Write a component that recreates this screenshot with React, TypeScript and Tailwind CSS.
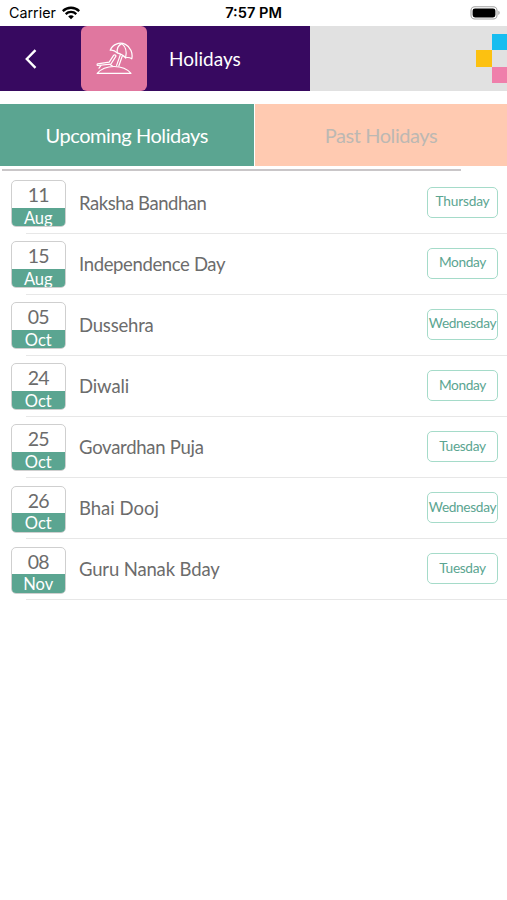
interface Holiday {
  day: string;
  month: string;
  name: string;
  weekday: string;
  tracking: string;
}

const holidays: Holiday[] = [
  { day: "11", month: "Aug", name: "Raksha Bandhan", weekday: "Thursday", tracking: "tracking-[-0.46px]" },
  { day: "15", month: "Aug", name: "Independence Day", weekday: "Monday", tracking: "tracking-[-0.36px]" },
  { day: "05", month: "Oct", name: "Dussehra", weekday: "Wednesday", tracking: "tracking-[-0.2px]" },
  { day: "24", month: "Oct", name: "Diwali", weekday: "Monday", tracking: "tracking-[-0.1px]" },
  { day: "25", month: "Oct", name: "Govardhan Puja", weekday: "Tuesday", tracking: "tracking-[-0.27px]" },
  { day: "26", month: "Oct", name: "Bhai Dooj", weekday: "Wednesday", tracking: "tracking-normal" },
  { day: "08", month: "Nov", name: "Guru Nanak Bday", weekday: "Tuesday", tracking: "tracking-[-0.15px]" },
];

const weekdayTracking: Record<string, string> = {
  Monday: "tracking-[-0.35px]",
  Tuesday: "tracking-[-0.35px]",
  Wednesday: "tracking-[-0.35px]",
  Thursday: "tracking-[-0.2px]",
};

function WifiIcon() {
  return (
    <svg width="18" height="14" viewBox="0 0 18 14" fill="none" stroke="#000" strokeWidth="2.3">
      <path d="M0.8 5.1C5.4 0.6 12.6 0.6 17.2 5.1" />
      <path d="M3.7 8.1C6.7 5.2 11.3 5.2 14.3 8.1" />
      <path d="M6.2 10.4C7.8 8.9 10.2 8.9 11.8 10.4L9 13.2Z" fill="#000" stroke="none" />
    </svg>
  );
}

function BatteryIcon() {
  return (
    <svg width="31" height="14" viewBox="0 0 31 14" fill="none">
      <rect x="1" y="0.8" width="26" height="12.2" rx="3.8" stroke="#a3a3a3" strokeWidth="1.1" />
      <rect x="2.6" y="2.4" width="22.8" height="9" rx="2.4" fill="#000" />
      <path d="M28.3 4.8C30.2 5.5 30.2 8.3 28.3 9Z" fill="#a3a3a3" />
    </svg>
  );
}

function BackIcon() {
  return (
    <svg width="14" height="22" viewBox="0 0 14 22" fill="none" stroke="#fff" strokeWidth="2.4">
      <path d="M11.5 2.2L2.8 11L11.5 19.8" />
    </svg>
  );
}

function BeachIcon() {
  return (
    <svg
      width="38"
      height="34"
      viewBox="0 0 38 34"
      fill="none"
      stroke="#fff"
      strokeWidth="1.2"
      strokeLinecap="round"
      strokeLinejoin="round"
    >
      {/* umbrella */}
      <path d="M15.2 8.2C17.4 2.6 24.2 -0.6 30.4 2.4C35.6 5 38 11 36.8 16.8C34.6 15.4 32.6 15.2 30.6 15.8C28.4 13.2 25.8 11.6 22.2 10.8C20 8.6 17.8 7.8 15.2 8.2Z" />
      <path d="M22.2 10.8C21.8 6.8 23.4 3.2 26.8 1.6C30.6 4.6 32 10.2 30.6 15.8" />
      <path d="M25.4 12.6L21.6 23.4M27.4 13.8L23.8 24" />
      {/* deck chair */}
      <path d="M18.6 13.4L14.2 20.2L2.6 21.8C1.8 22 2 23.6 2.8 23.5L15.8 22.2L20.8 14.4C21.4 13.2 19.4 12.2 18.6 13.4Z" />
      <path d="M6 23.4L4 26.2M15 22.4L17.4 24" />
      {/* sand */}
      <path d="M2.2 31.4C9.8 22.2 28.4 22.2 36 31.4Z" />
    </svg>
  );
}

function HolidayRow({ day, month, name, weekday, tracking }: Holiday) {
  return (
    <li className="flex h-[61.1px] flex-col">
      <div className="flex flex-1 items-center pl-[10.5px] pr-[9px]">
        <div className="mt-[2px] flex h-[47px] w-[55.5px] shrink-0 flex-col overflow-hidden rounded-[5px] border border-[#cfcfcf] text-center">
          <div className="h-[26.5px] text-[19.5px] leading-[27px] tracking-[-0.8px] text-[#6c6c6c]">{day}</div>
          <div className="-mx-px -mb-px flex-1 bg-[#5ba591] text-[16.5px] leading-[21px] text-white">{month}</div>
        </div>
        <p className={`ml-[13px] flex-1 whitespace-nowrap text-[18.5px] leading-6 text-[#6c6c6c] ${tracking}`}>
          {name}
        </p>
        <span
          className={`-mt-px flex h-[31px] w-[71px] shrink-0 items-center justify-center rounded-[5px] border border-[#a5dbc9] pb-px text-[13.7px] text-[#5ba591] ${weekdayTracking[weekday]}`}
        >
          {weekday}
        </span>
      </div>
      <div className="ml-[26px] h-px bg-[#e7e7e7]" />
    </li>
  );
}

export default function App() {
  return (
    <div className="h-[900px] w-[507px] overflow-hidden bg-white font-['Lato',sans-serif]">
      <div className="grid h-[26px] grid-cols-3 items-center px-[9px] font-['Inter',sans-serif] text-black">
        <div className="flex items-center gap-[6px] text-[14.3px]">
          Carrier
          <WifiIcon />
        </div>
        <div className="pt-px text-center text-[14.6px] font-semibold">7:57 PM</div>
        <div className="-mr-[3px] flex justify-end">
          <BatteryIcon />
        </div>
      </div>

      <header className="flex h-[65px] bg-[#e1e1e1]">
        <div className="flex w-[310px] items-center bg-[#370960]">
          <button className="flex w-[81px] items-center pl-[24px]" aria-label="Back">
            <BackIcon />
          </button>
          <div className="flex h-[65px] w-[66px] items-center justify-center rounded-[6px] bg-[#e0779f]">
            <BeachIcon />
          </div>
          <h1 className="ml-[22px] mt-[2px] text-[19px] text-white">Holidays</h1>
        </div>
        <div className="ml-auto grid h-[49px] w-[31px] grid-cols-2 grid-rows-3 self-center">
          <div className="col-start-2 bg-[#17bdf0]" />
          <div className="col-start-1 row-start-2 bg-[#fcc111]" />
          <div className="col-start-2 row-start-3 bg-[#ef7fab]" />
        </div>
      </header>

      <div className="mt-[13px] flex h-[62px] gap-[1.5px] text-[20px] tracking-[-0.42px]">
        <button className="w-[253.5px] bg-[#5ba591] text-white">Upcoming Holidays</button>
        <button className="flex-1 bg-[#ffcab1] text-[#bcb8b3]">Past Holidays</button>
      </div>

      <div className="ml-[2px] mt-[3px] h-[2px] w-[459px] bg-[#c9c6c8]" />

      <ul className="mt-[1.5px]">
        {holidays.map((h) => (
          <HolidayRow key={h.name} {...h} />
        ))}
      </ul>
    </div>
  );
}
